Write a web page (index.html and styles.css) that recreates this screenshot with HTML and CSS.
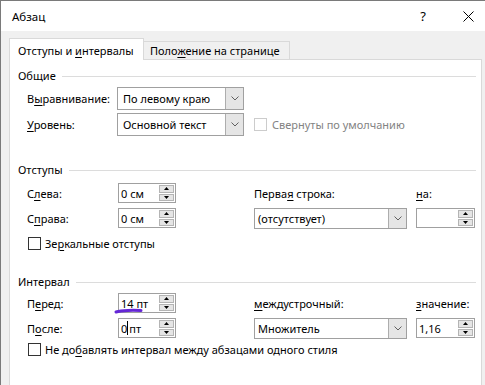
FILE: index.html
```html
<!DOCTYPE html>
<html lang="ru">
<head>
    <meta charset="UTF-8">
    <title>Абзац</title>
    <link rel="stylesheet" href="styles.css">
</head>
<body>
    <div class="window">
        <div class="titlebar">
            <span class="title">Абзац</span>
            <span class="help">?</span>
            <svg class="close" width="11" height="11" viewBox="0 0 11 11">
                <path d="M0.5 0.5 L10.5 10.5 M10.5 0.5 L0.5 10.5" stroke="#000" stroke-width="1" fill="none"/>
            </svg>
        </div>
        <div class="body">
            <div class="tabs">
                <div class="tab active">Отступы и <u>и</u>нтервалы</div>
                <div class="tab">Поло<u>ж</u>ение на странице</div>
            </div>
            <div class="panel">

                <!-- Общие -->
                <div class="legend legend-first"><span>Общие</span><span class="rule"></span></div>
                <div class="grid general">
                    <span class="label">В<u>ы</u>равнивание:</span>
                    <div class="select tall">
                        <span class="value">По левому краю</span>
                        <span class="drop"><svg width="8" height="5" viewBox="0 0 8 5"><path d="M0.5 0.5 L4 4 L7.5 0.5" stroke="#606060" fill="none"/></svg></span>
                    </div>
                    <span></span>
                    <span></span>
                    <span class="label"><u>У</u>ровень:</span>
                    <div class="select tall">
                        <span class="value">Основной текст</span>
                        <span class="drop"><svg width="8" height="5" viewBox="0 0 8 5"><path d="M0.5 0.5 L4 4 L7.5 0.5" stroke="#606060" fill="none"/></svg></span>
                    </div>
                    <span></span>
                    <label class="check disabled"><span class="box"></span><span>Свернуты по умолчанию</span></label>
                </div>

                <!-- Отступы -->
                <div class="legend legend-indent"><span>Отступы</span><span class="rule"></span></div>
                <div class="grid spacing">
                    <span class="label">С<u>л</u>ева:</span>
                    <div class="spin">
                        <span class="value">0 см</span>
                        <span class="btns">
                            <span class="btn"><svg width="5" height="3" viewBox="0 0 5 3"><path d="M0 3 L2.5 0 L5 3 Z" fill="#000"/></svg></span>
                            <span class="btn"><svg width="5" height="3" viewBox="0 0 5 3"><path d="M0 0 L2.5 3 L5 0 Z" fill="#000"/></svg></span>
                        </span>
                    </div>
                    <span></span>
                    <span class="label">Перва<u>я</u> строка:</span>
                    <span></span>
                    <span class="label"><u>н</u>а:</span>

                    <span class="label">С<u>п</u>рава:</span>
                    <div class="spin">
                        <span class="value">0 см</span>
                        <span class="btns">
                            <span class="btn"><svg width="5" height="3" viewBox="0 0 5 3"><path d="M0 3 L2.5 0 L5 3 Z" fill="#000"/></svg></span>
                            <span class="btn"><svg width="5" height="3" viewBox="0 0 5 3"><path d="M0 0 L2.5 3 L5 0 Z" fill="#000"/></svg></span>
                        </span>
                    </div>
                    <span></span>
                    <div class="select">
                        <span class="value">(отсутствует)</span>
                        <span class="drop"><svg width="8" height="5" viewBox="0 0 8 5"><path d="M0.5 0.5 L4 4 L7.5 0.5" stroke="#606060" fill="none"/></svg></span>
                    </div>
                    <span></span>
                    <div class="spin">
                        <span class="value"></span>
                        <span class="btns">
                            <span class="btn"><svg width="5" height="3" viewBox="0 0 5 3"><path d="M0 3 L2.5 0 L5 3 Z" fill="#000"/></svg></span>
                            <span class="btn"><svg width="5" height="3" viewBox="0 0 5 3"><path d="M0 0 L2.5 3 L5 0 Z" fill="#000"/></svg></span>
                        </span>
                    </div>
                </div>
                <label class="check row-check mirror"><span class="box"></span><span>Зе<u>р</u>кальные отступы</span></label>

                <!-- Интервал -->
                <div class="legend legend-interval"><span>Интервал</span><span class="rule"></span></div>
                <div class="grid spacing interval">
                    <span class="label">П<u>е</u>ред:</span>
                    <div class="spin marked">
                        <span class="value">14 пт</span>
                        <span class="btns">
                            <span class="btn"><svg width="5" height="3" viewBox="0 0 5 3"><path d="M0 3 L2.5 0 L5 3 Z" fill="#000"/></svg></span>
                            <span class="btn"><svg width="5" height="3" viewBox="0 0 5 3"><path d="M0 0 L2.5 3 L5 0 Z" fill="#000"/></svg></span>
                        </span>
                        <svg class="ink" width="30" height="7" viewBox="0 0 30 7">
                            <path d="M2 5 Q 6 3.6 14 3.4 Q 22 3.2 27 3.6" stroke="#6527d6" stroke-width="3" stroke-linecap="round" fill="none"/>
                        </svg>
                    </div>
                    <span></span>
                    <span class="label"><u>м</u>еждустрочный:</span>
                    <span></span>
                    <span class="label"><u>з</u>начение:</span>

                    <span class="label">П<u>о</u>сле:</span>
                    <div class="spin">
                        <span class="value">0<span class="caret"></span>пт</span>
                        <span class="btns">
                            <span class="btn"><svg width="5" height="3" viewBox="0 0 5 3"><path d="M0 3 L2.5 0 L5 3 Z" fill="#000"/></svg></span>
                            <span class="btn"><svg width="5" height="3" viewBox="0 0 5 3"><path d="M0 0 L2.5 3 L5 0 Z" fill="#000"/></svg></span>
                        </span>
                    </div>
                    <span></span>
                    <div class="select">
                        <span class="value">Множитель</span>
                        <span class="drop"><svg width="8" height="5" viewBox="0 0 8 5"><path d="M0.5 0.5 L4 4 L7.5 0.5" stroke="#606060" fill="none"/></svg></span>
                    </div>
                    <span></span>
                    <div class="spin">
                        <span class="value">1,16</span>
                        <span class="btns">
                            <span class="btn"><svg width="5" height="3" viewBox="0 0 5 3"><path d="M0 3 L2.5 0 L5 3 Z" fill="#000"/></svg></span>
                            <span class="btn"><svg width="5" height="3" viewBox="0 0 5 3"><path d="M0 0 L2.5 3 L5 0 Z" fill="#000"/></svg></span>
                        </span>
                    </div>
                </div>
                <label class="check row-check samestyle"><span class="box"></span><span>Не до<u>б</u>авлять интервал между абзацами одного стиля</span></label>

            </div>
        </div>
    </div>
</body>
</html>
```

FILE: styles.css
```css
    body {
        font-family: "Noto Sans", "Open Sans", sans-serif;
        font-size: 11px;
        margin: 0;
        background: #f0f0f0;
        color: #000000;
        width: 485px;
        height: 385px;
        overflow: hidden;
    }
    u {
        text-decoration-thickness: 1px;
        text-underline-offset: 2px;
    }
    .window {
        border-top: 1px solid #7a7a7a;
        border-left: 1px solid #7a7a7a;
        height: 384px;
        overflow: hidden;
    }
    .titlebar {
        background-color: #ffffff;
        height: 30px;
        display: flex;
        align-items: center;
        padding-left: 11px;
        padding-right: 11px;
    }
    .title {
        flex: 1;
        font-size: 11.5px;
    }
    .help {
        font-size: 13px;
        margin-right: 37px;
    }
    .body {
        background-color: #f0f0f0;
        padding: 7px 0 0 8px;
    }
    .tabs {
        display: flex;
        align-items: flex-end;
        height: 21px;
    }
    .tab {
        box-sizing: border-box;
        height: 18px;
        line-height: 18px;
        width: 146px;
        padding-left: 6px;
        background-color: #f0f0f0;
        border-top: 1px solid #d9d9d9;
        border-right: 1px solid #d9d9d9;
        white-space: nowrap;
    }
    .tab.active {
        position: relative;
        z-index: 1;
        height: 22px;
        width: 135px;
        line-height: 24px;
        padding-left: 8px;
        margin-bottom: -1px;
        background-color: #ffffff;
        border-left: 1px solid #d9d9d9;
    }
    .panel {
        box-sizing: border-box;
        width: 473px;
        height: 340px;
        background-color: #ffffff;
        border: 1px solid #d9d9d9;
        padding: 0 5px 0 8px;
    }
    .legend {
        display: flex;
        align-items: center;
        height: 16px;
        line-height: 16px;
    }
    .legend .rule {
        flex: 1;
        height: 1px;
        margin-left: 6px;
        background-color: #dcdcdc;
    }
    .legend-first {
        margin-top: 8px;
    }
    .legend-indent {
        margin-top: 26px;
    }
    .legend-interval {
        margin-top: 24px;
    }
    .grid {
        display: grid;
        align-items: center;
        padding-left: 9px;
    }
    .general {
        margin-top: 3px;
        grid-template-columns: 90px 127px 10px 1fr;
        grid-template-rows: 23px 23px;
        row-gap: 3px;
    }
    .spacing {
        margin-top: 5px;
        grid-template-columns: 91px 58px 78px 153px 9px 59px;
        grid-template-rows: 20px 20px;
        row-gap: 5px;
    }
    .interval {
        margin-top: 3px;
    }
    .label {
        white-space: nowrap;
    }
    .select {
        box-sizing: border-box;
        height: 21px;
        display: flex;
        border: 1px solid #a0a0a0;
        background-color: #ffffff;
    }
    .select.tall {
        height: 23px;
    }
    .select .value {
        flex: 1;
        padding-left: 3px;
        display: flex;
        align-items: center;
        white-space: nowrap;
        overflow: hidden;
    }
    .select.tall .value {
        padding-left: 5px;
    }
    .drop {
        width: 17px;
        background-color: #e5e5e5;
        border-left: 1px solid #adadad;
        display: flex;
        align-items: center;
        justify-content: center;
    }
    .spin {
        box-sizing: border-box;
        height: 20px;
        display: flex;
        border: 1px solid #a0a0a0;
        background-color: #ffffff;
    }
    .spin .value {
        flex: 1;
        padding-left: 2px;
        display: flex;
        align-items: center;
        white-space: nowrap;
    }
    .btns {
        width: 15px;
        margin: 1px;
        display: flex;
        flex-direction: column;
        gap: 1px;
    }
    .btn {
        flex: 1;
        box-sizing: border-box;
        background-color: #e5e5e5;
        border: 1px solid #b4b4b4;
        display: flex;
        align-items: center;
        justify-content: center;
    }
    .marked {
        position: relative;
    }
    .ink {
        position: absolute;
        left: -5px;
        top: 13px;
    }
    .caret {
        display: inline-block;
        width: 1px;
        height: 14px;
        background-color: #000000;
        margin: 0 1px 0 0;
    }
    .check {
        display: flex;
        align-items: center;
        gap: 4px;
        height: 13px;
        white-space: nowrap;
    }
    .check .box {
        box-sizing: border-box;
        width: 13px;
        height: 13px;
        border: 1px solid #333333;
        background-color: #ffffff;
    }
    .check.disabled {
        color: #838383;
        gap: 5px;
    }
    .check.disabled .box {
        border-color: #cccccc;
    }
    .row-check {
        padding-left: 10px;
    }
    .mirror {
        margin-top: 9px;
    }
    .samestyle {
        margin-top: 5px;
    }
```
